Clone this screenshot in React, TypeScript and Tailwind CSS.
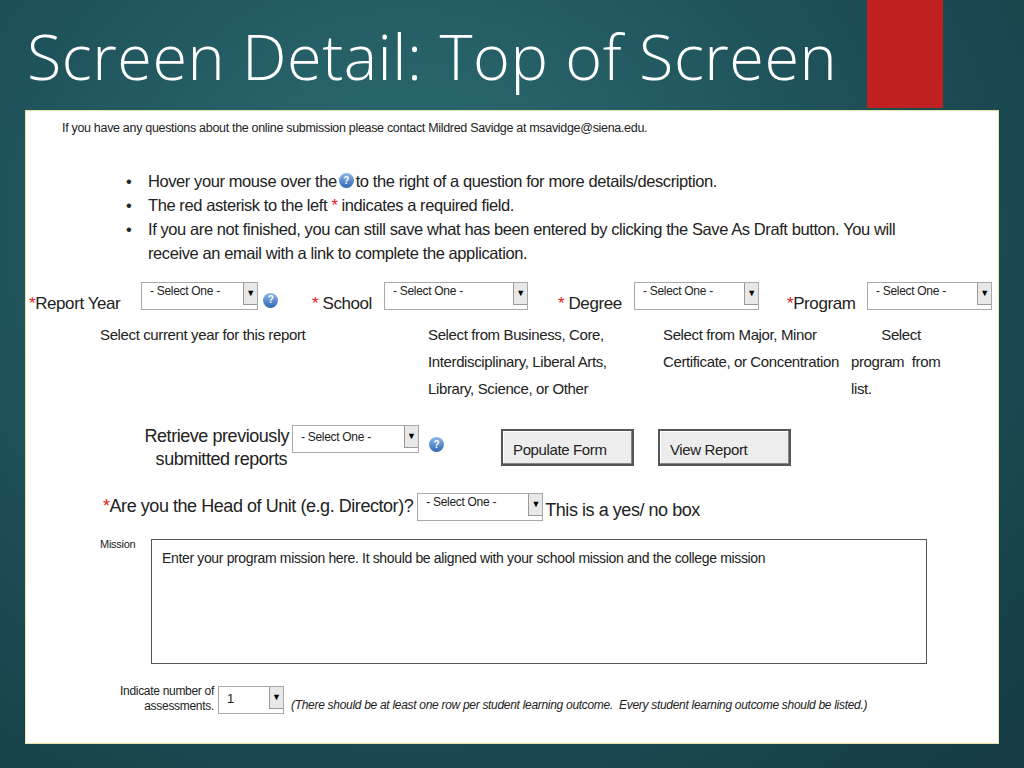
import React from "react";

const F = { fontFamily: '"Liberation Sans", Arial, sans-serif' };

function Sel({ w, h = 28, label = "- Select One -", big = false }: { w: number; h?: number; label?: string; big?: boolean }) {
  return (
    <div className="flex border border-[#a9a9a9] bg-white shrink-0" style={{ width: w, height: h }}>
      <div className={`flex-1 pl-2 pt-[2px] ${big ? "text-[13px]" : "text-[12px]"} text-[#222] tracking-tight whitespace-nowrap`}>{label}</div>
      <div className="w-[14px] h-[22px] bg-[#e8e8e8] border-l border-b border-[#999] flex items-center justify-center text-[9px] text-black">▼</div>
    </div>
  );
}

function Info() {
  return (
    <div className="w-[15px] h-[15px] rounded-full bg-gradient-to-b from-[#8fb8e8] to-[#2f68b4] text-white text-[10px] font-bold flex items-center justify-center shrink-0">?</div>
  );
}

function Star() {
  return <span className="text-[#e02020]">*</span>;
}

export default function App() {
  return (
    <div className="w-[1024px] h-[768px] relative overflow-hidden bg-[radial-gradient(ellipse_at_40%_30%,#2e6e74_0%,#1d4f58_55%,#143a44_100%)]" style={F}>
      <div className="absolute left-[867px] top-0 w-[76px] h-[108px] bg-[#c0201f]" />
      <div className="absolute left-[27px] top-[16px] text-white text-[63px] leading-[80px] tracking-[0.5px] whitespace-nowrap" style={{ fontFamily: '"Open Sans", sans-serif', fontWeight: 300 }}>
        Screen Detail: Top of Screen
      </div>
      <div className="absolute left-[25px] top-[110px] w-[974px] h-[634px] bg-white border border-[#e8e3a0] text-[#222]">
        <div className="ml-[36px] mt-[8px] text-[12.5px] tracking-tight">If you have any questions about the online submission please contact Mildred Savidge at msavidge@siena.edu.</div>
        <ul className="ml-[100px] mt-[31px] text-[16.5px] leading-[24px] tracking-tight w-[790px]">
          <li className="flex"><span className="w-[22px]">•</span><span className="flex items-center gap-[2px]">Hover your mouse over the <Info /> to the right of a question for more details/description.</span></li>
          <li className="flex"><span className="w-[22px]">•</span><span>The red asterisk to the left <Star /> indicates a required field.</span></li>
          <li className="flex"><span className="w-[22px] shrink-0">•</span><span>If you are not finished, you can still save what has been entered by clicking the Save As Draft button. You will receive an email with a link to complete the application.</span></li>
        </ul>
        <div className="flex items-end mt-[17px] ml-[3px] text-[17px] tracking-tight leading-none whitespace-nowrap">
          <span className="w-[112px] pb-[0px] -mb-[2px]"><Star />Report Year</span>
          <Sel w={117} />
          <div className="ml-[5px] mb-[2px]"><Info /></div>
          <span className="w-[106px] pl-[34px] -mb-[2px]"><Star /> School</span>
          <Sel w={144} />
          <span className="w-[106px] pl-[30px] -mb-[2px]"><Star /> Degree</span>
          <Sel w={125} />
          <span className="w-[108px] pl-[28px] -mb-[2px]"><Star />Program</span>
          <Sel w={125} />
        </div>
        <div className="flex mt-[11px] text-[15px] leading-[27px] tracking-tight">
          <div className="ml-[74px] w-[328px]">Select current year for this report</div>
          <div className="w-[235px]">Select from Business, Core,<br />Interdisciplinary, Liberal Arts,<br />Library, Science, or Other</div>
          <div className="w-[188px]">Select from Major, Minor<br />Certificate, or Concentration</div>
          <div className="w-[100px]"><div className="text-center">Select</div>program &nbsp;from<br />list.</div>
        </div>
        <div className="flex items-start mt-[23px]">
          <div className="ml-[100px] w-[163px] text-right text-[18px] leading-[23px] tracking-tight whitespace-nowrap">Retrieve previously<br /><span className="mr-[2px]">submitted reports</span></div>
          <div className="ml-[3px]"><Sel w={127} /></div>
          <div className="ml-[10px] mt-[12px]"><Info /></div>
          <div className="ml-[57px] mt-[4px] w-[133px] h-[37px] border-2 border-[#555] bg-[#ededed] shadow-[inset_-1px_-1px_0_#888,inset_1px_1px_0_#fff] text-[15px] pl-[10px] pt-[8px] tracking-tight">Populate Form</div>
          <div className="ml-[24px] mt-[4px] w-[133px] h-[37px] border-2 border-[#555] bg-[#ededed] shadow-[inset_-1px_-1px_0_#888,inset_1px_1px_0_#fff] text-[15px] pl-[10px] pt-[8px] tracking-tight">View Report</div>
        </div>
        <div className="flex items-end mt-[22px] ml-[77px] text-[18px] leading-none tracking-tight whitespace-nowrap">
          <span className="pb-[6px]"><Star />Are you the Head of Unit (e.g. Director)?</span>
          <div className="ml-[4px]"><Sel w={126} /></div>
          <span className="ml-[2px] pb-[2px]">This is a yes/ no box</span>
        </div>
        <div className="flex mt-[15px]">
          <div className="ml-[74px] w-[51px] text-[11px] tracking-tight">Mission</div>
          <div className="w-[776px] h-[125px] border border-[#555] mt-[3px] px-[10px] pt-[8px] text-[14px] tracking-tight">Enter your program mission here. It should be aligned with your school mission and the college mission</div>
        </div>
        <div className="flex items-end mt-[20px]">
          <div className="ml-[90px] w-[98px] text-right text-[12px] leading-[15px] tracking-tight">Indicate number of<br />assessments.</div>
          <div className="ml-[4px]"><Sel w={66} label="1" big /></div>
          <div className="ml-[7px] text-[12px] italic tracking-tight">(There should be at least one row per student learning outcome. &nbsp;Every student learning outcome should be listed.)</div>
        </div>
      </div>
    </div>
  );
}
